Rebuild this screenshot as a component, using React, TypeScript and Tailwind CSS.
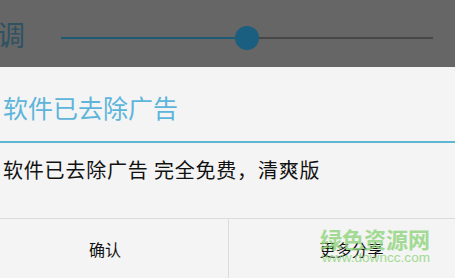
import React from "react";

export default function App() {
  return (
    <div className="w-[455px] h-[278px] overflow-hidden relative bg-[#f4f4f4]" style={{ fontFamily: '"Noto Sans CJK SC", "Noto Sans", sans-serif' }}>
      {/* dimmed background */}
      <div className="h-[67px] bg-[#666666] flex items-center">
        <div className="w-[64px] shrink-0 text-[28px] leading-none text-[#2f5263] -ml-[3px] mt-[0px]">调</div>
        <div className="flex-1 flex items-center pr-[22px] mt-[8px]">
          <div className="w-[174px] h-[2px] bg-[#1d5a75]" />
          <div className="w-[24px] h-[24px] rounded-full bg-[#1a5e80] shrink-0" />
          <div className="flex-1 h-[2px] bg-[#474747]" />
        </div>
      </div>
      {/* dialog */}
      <div className="h-[74px] flex items-center pl-[3px]">
        <span className="text-[25px] leading-none text-[#5db5da] mt-[7px]">软件已去除广告</span>
      </div>
      <div className="h-[2px] bg-[#5fb6d3]" />
      <div className="h-[75px] pl-[3px] pt-[13px]">
        <span className="text-[20px] leading-[28px] tracking-[0.8px] text-[#111]">软件已去除广告 完全免费，清爽版</span>
      </div>
      <div className="h-px bg-[#dcdcdc]" />
      <div className="grid grid-cols-[228px_1px_1fr] h-[59px]">
        <div className="flex items-center justify-center pr-[18px] text-[16px] text-[#111]">确认</div>
        <div className="bg-[#dcdcdc]" />
        <div className="flex items-center justify-center pl-[19px] text-[16px] text-[#111]">更多分享</div>
      </div>
      {/* watermark */}
      <div className="absolute left-[320px] top-[225px] flex flex-col items-start pointer-events-none">
        <span className="text-[22px] leading-[26px] font-bold text-[#8fd47c] opacity-80">绿色资源网</span>
        <span className="text-[13.6px] leading-[14px] text-[#8fd47c] opacity-80 ml-[2px]" style={{ fontFamily: '"Liberation Sans", Arial, sans-serif' }}>www.downcc.com</span>
      </div>
    </div>
  );
}
